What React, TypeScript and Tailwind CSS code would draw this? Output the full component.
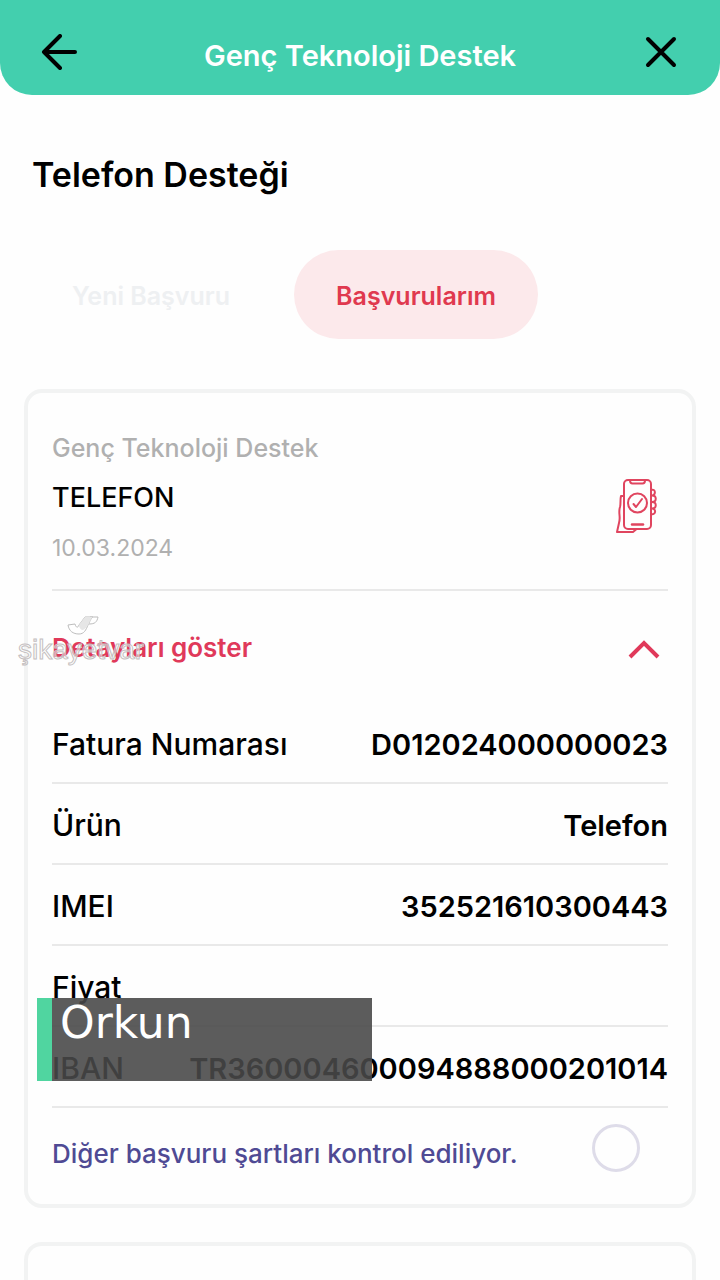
import { useState } from "react";
import { clsx } from "clsx";

interface Detail {
  label: string;
  value: string;
}

const details: Detail[] = [
  { label: "Fatura Numarası", value: "D012024000000023" },
  { label: "Ürün", value: "Telefon" },
  { label: "IMEI", value: "352521610300443" },
  { label: "Fiyat", value: "" },
  { label: "IBAN", value: "TR360004600094888000201014" },
];

const tabs = ["Yeni Başvuru", "Başvurularım"];

function BackIcon() {
  return (
    <svg className="h-9 w-9" viewBox="0 0 36 36" fill="none" stroke="currentColor" strokeWidth="4" strokeLinecap="round" strokeLinejoin="round">
      <path d="M34 18H3M19 2 3 18l16 16" />
    </svg>
  );
}

function CloseIcon() {
  return (
    <svg className="h-9 w-9" viewBox="0 0 36 36" fill="none" stroke="currentColor" strokeWidth="4" strokeLinecap="round">
      <path d="m5 5 26 26M31 5 5 31" />
    </svg>
  );
}

function PhoneInHandIcon() {
  return (
    <svg className="h-14 w-11" viewBox="0 0 44 56" fill="none" stroke="#e0455f" strokeWidth="2" strokeLinecap="round" strokeLinejoin="round">
      <rect x="8" y="2" width="27" height="49" rx="4" />
      <path d="M14 2.500c0 2 .8 3 2.500 3h10c1.700 0 2.500-1 2.500-3" />
      <path d="M16 46.500h11" strokeWidth="2.500" />
      <circle cx="21.500" cy="25" r="9.500" />
      <path d="m17.500 26 2.500 3 6-8" />
      <path d="M8 18H5c-1 4 0 7-1 11-2 6 1 10-1 16L1 54h16l3-2.500" />
      <path d="M35 12c5-2 5 5.500 1 5.500 5 0 5 6.500 0 6.500 5 0 5 6.500 0 6.500 4.500 0 4 7-1 5.500" />
    </svg>
  );
}

function Watermark() {
  return (
    <div className="pointer-events-none absolute top-[616px] left-[18px] h-[50px]">
      <svg className="ml-12 h-5 w-9" viewBox="0 0 36 20" fill="#fff" stroke="#bdbdbd" strokeWidth="1" strokeLinejoin="round">
        <path d="M24 1h8c-1 5-3 7-9 7" />
        <path d="M13 9 19 1h8c-3 2-3 5-5 8-2 5-4 9-9 9C7 18 3 15 2 9l7-1c1 4 3 4 4 1Z" />
        <path d="M13 9 19 1h8c-3 2-3 5-5 8-2 3-4 5-6 5-2-1-3-3-3-5Z" fill="#e6e6e6" stroke="none" />
      </svg>
      <span className="block font-['Liberation_Sans',sans-serif] text-[28px] leading-7 text-white/50 [-webkit-text-stroke:1px_#c4bec0]">
        şikayetvar
      </span>
    </div>
  );
}

export default function App() {
  const [activeTab, setActiveTab] = useState("Başvurularım");
  const [open, setOpen] = useState(true);

  return (
    <div className="relative flex min-h-screen flex-col overflow-hidden bg-[#fefefe] font-['Inter',sans-serif] text-black">
      <header className="flex h-[95px] items-center justify-between rounded-b-[32px] bg-[#43cfae] px-[41px] pt-2">
        <button type="button" aria-label="Geri">
          <BackIcon />
        </button>
        <h1 className="pt-2 text-[29px] font-semibold text-white">Genç Teknoloji Destek</h1>
        <button type="button" aria-label="Kapat">
          <CloseIcon />
        </button>
      </header>

      <h2 className="mt-14 px-8 text-[34px] leading-12 font-semibold">Telefon Desteği</h2>

      <div className="mt-[51px] flex px-8">
        {tabs.map((tab) => (
          <button
            key={tab}
            type="button"
            onClick={() => setActiveTab(tab)}
            className={clsx(
              "h-[89px] rounded-full pt-1 text-[25px] font-semibold",
              tab === activeTab ? "ml-6 bg-[#fce9eb] px-[42px] text-[#e0394f]" : "px-10 text-[#eef0f2]"
            )}
          >
            {tab}
          </button>
        ))}
      </div>

      <section className="mx-6 mt-[50px] rounded-[18px] border-4 border-[#f2f3f3] px-6 pb-8">
        <div className="flex items-center justify-between border-b-2 border-[#e9e9e9] pt-[30px] pb-4">
          <div className="leading-[50px]">
            <p className="text-[25px] font-medium text-[#b0b0b0]">Genç Teknoloji Destek</p>
            <p className="text-[27px] font-medium">TELEFON</p>
            <p className="text-[23px] text-[#b0b0b0]">10.03.2024</p>
          </div>
          <div className="pt-4 pr-2">
            <PhoneInHandIcon />
          </div>
        </div>

        <button
          type="button"
          aria-expanded={open}
          onClick={() => setOpen(!open)}
          className="flex h-28 w-full items-center justify-between pr-2 text-[26px] font-semibold text-[#e0395a]"
        >
          Detayları göster
          <svg className={clsx("mt-1 h-5 w-8", !open && "rotate-180")} viewBox="0 0 32 20" fill="none" stroke="currentColor" strokeWidth="4">
            <path d="M2 18 16 4l14 14" />
          </svg>
        </button>

        {open && (
          <dl>
            {details.map((detail) => (
              <div
                key={detail.label}
                className="flex h-[81px] items-center justify-between border-b-2 border-[#e9e9e9] pt-1"
              >
                <dt className="text-[30px] font-medium">{detail.label}</dt>
                <dd className="text-[29px] font-semibold">{detail.value}</dd>
              </div>
            ))}
          </dl>
        )}

        <div className="flex items-start justify-between pt-4 pr-7">
          <p className="pt-3 text-[26px] leading-9 font-medium text-[#4f4a94]">
            Diğer başvuru şartları kontrol ediliyor.
          </p>
          <span role="status" className="h-12 w-12 rounded-full border-3 border-[#dedce9]" />
        </div>
      </section>

      <section className="mx-6 mt-[34px] min-h-9 flex-1 rounded-t-[18px] border-4 border-b-0 border-[#f2f3f3]" />

      <Watermark />

      <div className="absolute top-[998px] left-[37px] h-[83px] w-[335px] border-l-[15px] border-[#50d5a0] bg-[#484848]/89 bg-clip-padding pl-2 font-['DejaVu_Sans',sans-serif] text-[44px] leading-[50px] text-white">
        Orkun
      </div>
    </div>
  );
}
